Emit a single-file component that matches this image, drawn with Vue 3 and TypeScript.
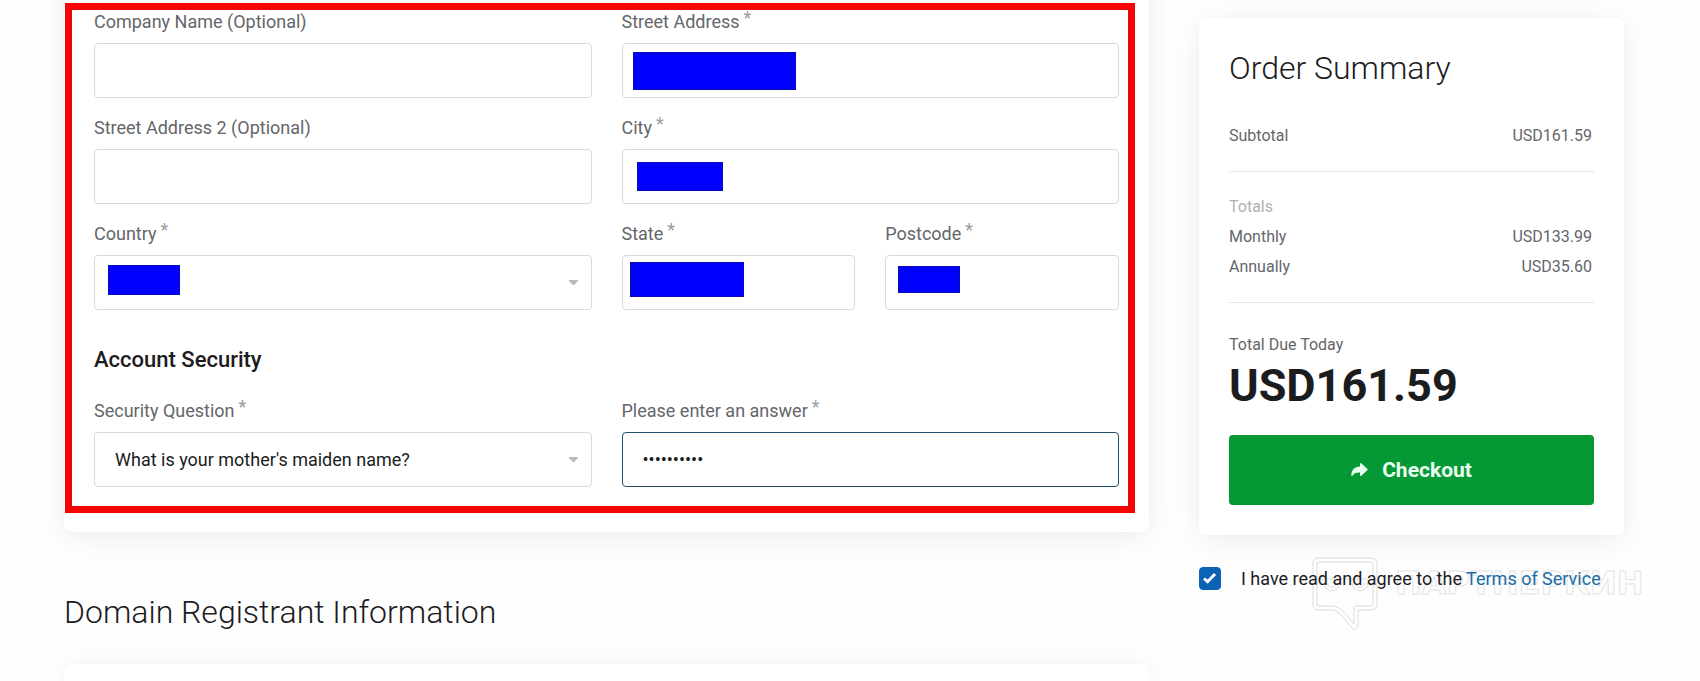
<script setup lang="ts">
import { ref } from 'vue'

interface Mask {
  left: number
  top: number
  width: number
  height: number
}

interface Field {
  id: string
  label: string
  kind: 'text' | 'password' | 'select'
  required?: boolean
  half?: boolean
  value?: string
  mask?: Mask
}

const addressFields: Field[] = [
  { id: 'company', label: 'Company Name (Optional)', kind: 'text' },
  { id: 'street', label: 'Street Address', kind: 'text', required: true, mask: { left: 11, top: 9, width: 163, height: 38 } },
  { id: 'street2', label: 'Street Address 2 (Optional)', kind: 'text' },
  { id: 'city', label: 'City', kind: 'text', required: true, mask: { left: 15, top: 13, width: 86, height: 29 } },
  { id: 'country', label: 'Country', kind: 'select', required: true, value: '', mask: { left: 14, top: 10, width: 72, height: 30 } },
  { id: 'state', label: 'State', kind: 'text', required: true, half: true, mask: { left: 8, top: 7, width: 114, height: 35 } },
  { id: 'postcode', label: 'Postcode', kind: 'text', required: true, half: true, mask: { left: 13, top: 11, width: 62, height: 27 } },
]

const securityFields: Field[] = [
  { id: 'question', label: 'Security Question', kind: 'select', required: true, value: "What is your mother's maiden name?" },
  { id: 'answer', label: 'Please enter an answer', kind: 'password', required: true, value: 'abcdefghij' },
]

const groups = [
  { title: '', fields: addressFields },
  { title: 'Account Security', fields: securityFields },
]

const totals = [
  { name: 'Monthly', amount: 'USD133.99' },
  { name: 'Annually', amount: 'USD35.60' },
]

const agreed = ref(true)

function maskStyle(m: Mask) {
  return { left: `${m.left}px`, top: `${m.top}px`, width: `${m.width}px`, height: `${m.height}px` }
}
</script>

<template>
  <div class="page">
    <main class="main">
      <section class="card billing">
        <template v-for="group in groups" :key="group.title">
          <h3 v-if="group.title" class="subtitle">{{ group.title }}</h3>
          <div class="fields">
            <div v-for="f in group.fields" :key="f.id" class="field" :class="{ half: f.half }">
              <label :for="f.id">{{ f.label }}<span v-if="f.required" class="star">*</span></label>
              <div class="control">
                <template v-if="f.kind === 'select'">
                  <select :id="f.id">
                    <option>{{ f.value }}</option>
                  </select>
                  <svg class="caret" viewBox="0 0 9 5" aria-hidden="true"><path d="M0 0h9v1L5.2 5H3.8L0 1z" /></svg>
                </template>
                <input v-else :id="f.id" :type="f.kind" :value="f.value" :class="{ active: f.kind === 'password' }" autocomplete="off" />
                <span v-if="f.mask" class="mask" :style="maskStyle(f.mask)"></span>
              </div>
            </div>
          </div>
        </template>
        <div class="frame"></div>
      </section>

      <h2 class="title domain">Domain Registrant Information</h2>
      <section class="card registrant"></section>
    </main>

    <aside class="side">
      <section class="card summary">
        <h2 class="title">Order Summary</h2>
        <dl class="rows">
          <div class="row"><dt>Subtotal</dt><dd>USD161.59</dd></div>
        </dl>
        <hr />
        <p class="muted">Totals</p>
        <dl class="rows">
          <div v-for="t in totals" :key="t.name" class="row"><dt>{{ t.name }}</dt><dd>{{ t.amount }}</dd></div>
        </dl>
        <hr />
        <p class="due">Total Due Today</p>
        <p class="amount">USD161.59</p>
        <button type="button" class="checkout">
          <svg class="arrow" viewBox="0 0 17 14" aria-hidden="true">
            <path d="M9 .7c0-.6.6-.9 1.1-.5l6.2 5.6c.5.4.5 1 0 1.4l-6.2 5.7c-.5.4-1.1.1-1.1-.5V9.500C5.400 9.300 3 10 1.600 12.600c-.5.8-1.300.6-1.300-.3C.4 7.300 3.400 3.800 9 3.600z" />
          </svg>
          <span>Checkout</span>
        </button>
      </section>

      <div class="terms">
        <span class="tick">
          <input id="agree" v-model="agreed" type="checkbox" />
          <svg v-if="agreed" viewBox="0 0 22 23" aria-hidden="true"><path d="M5 11.500l3.600 3.200L16 7" /></svg>
        </span>
        <label for="agree">I have read and agree to the <a href="#">Terms of Service</a></label>
        <div class="watermark">
          <svg viewBox="0 0 66 73" aria-hidden="true">
            <path d="M6 1h53q6 0 6 6v40q0 6-6 6H46v16q-2 5-6 2C34 65 28 53 20 53H6q-5 0-5-6V7q0-6 5-6z" />
            <path d="M8 5h51q2 0 2 2v40q0 2-2 2H43q-1 0-1 2v16C36 61 30 49 20 49H7q-2 0-2-2V7q0-2 3-2z" />
            <path d="M5 22h56M12 27c2 9 14 9 16 0h-5c-1 4-6 4-7 0zM40 27c2 9 14 9 16 0h-5c-1 4-6 4-7 0z" />
          </svg>
          <span>ПАРТНЕРКИН</span>
        </div>
      </div>
    </aside>
  </div>
</template>

<style>
body {
  margin: 0;
  background: #fefefe;
}
</style>

<style scoped>
.page {
  box-sizing: border-box;
  min-height: 100vh;
  padding: 0 76px 0 64px;
  display: grid;
  grid-template-columns: minmax(0, 1085fr) minmax(0, 425fr);
  column-gap: 50px;
  overflow: hidden;
  font-family: Roboto, 'Liberation Sans', sans-serif;
  font-size: 16px;
  color: #1b1c1e;
}
.page *,
.page *::before {
  box-sizing: border-box;
}
h2, h3, p, dl, dd {
  margin: 0;
}
.main {
  display: flex;
  flex-direction: column;
}
.card {
  background: #fff;
  border-radius: 6px;
  box-shadow: 0 5px 30px rgba(0, 0, 0, 0.07), 0 0 2px rgba(0, 0, 0, 0.05);
}
.billing {
  position: relative;
  margin-top: -40px;
  padding: 50px 30px 45px;
}
.frame {
  position: absolute;
  inset: 43px 14px 19px 1px;
  border: 7px solid #f50505;
  pointer-events: none;
}
.fields {
  display: grid;
  grid-template-columns: repeat(4, minmax(0, 1fr));
  gap: 18px 30px;
}
.field {
  grid-column: span 2;
}
.field.half {
  grid-column: span 1;
}
.field label {
  display: block;
  margin-bottom: 9px;
  font-size: 18px;
  line-height: 24px;
  color: #64666a;
}
.star {
  margin-left: 4px;
  line-height: 1px;
  vertical-align: 4px;
  color: #999b9f;
}
.control {
  position: relative;
}
input:not([type='checkbox']),
select {
  display: block;
  width: 100%;
  height: 55px;
  margin: 0;
  padding: 0 20px;
  border: 1px solid #d9dadb;
  border-radius: 4px;
  outline: none;
  background: #fff;
  appearance: none;
  font: 18px Roboto, 'Liberation Sans', sans-serif;
  color: #1b1c1e;
}
input.active:not([type='checkbox']) {
  border-color: #22506c;
}
.caret {
  position: absolute;
  right: 14px;
  top: 25px;
  width: 9px;
  height: 5px;
  fill: #b9babc;
  pointer-events: none;
}
.mask {
  position: absolute;
  background: #0000fe;
  border: 1px solid #0a0ab0;
}
.subtitle {
  margin: 37px 0 26px;
  font-size: 22px;
  line-height: 26px;
  font-weight: 500;
}
.title {
  font-size: 32px;
  line-height: 40px;
  font-weight: 300;
}
.domain {
  margin: 60px 0 32px;
}
.registrant {
  flex: 1;
  border-radius: 6px 6px 0 0;
}
.summary {
  margin-top: 18px;
  padding: 30px;
}
.rows,
.muted,
.due {
  line-height: 30px;
  color: #64666a;
}
.summary .title {
  margin-bottom: 33px;
}
.row {
  display: flex;
  justify-content: space-between;
  padding-right: 2px;
}
hr {
  height: 1px;
  margin: 20px 0;
  border: 0;
  background: #e4e5e6;
}
.muted {
  color: #afb1b4;
}
.due {
  margin-top: 27px;
}
.amount {
  font-size: 45px;
  line-height: 52px;
  font-weight: 700;
}
.checkout {
  display: flex;
  align-items: center;
  justify-content: center;
  gap: 14px;
  width: 100%;
  height: 70px;
  margin-top: 23px;
  padding: 0;
  border: 0;
  border-radius: 4px;
  background: #049934;
  color: #e9fff0;
  font: 700 21px Roboto, 'Liberation Sans', sans-serif;
}
.arrow {
  width: 17px;
  height: 14px;
  fill: currentColor;
}
.terms {
  position: relative;
  isolation: isolate;
  display: flex;
  align-items: center;
  gap: 20px;
  margin-top: 32px;
  font-size: 18px;
  line-height: 23px;
  white-space: nowrap;
}
.tick {
  position: relative;
  width: 22px;
  height: 23px;
}
.tick input {
  display: block;
  width: 22px;
  height: 23px;
  margin: 0;
  appearance: none;
  border: 1px solid #0c62b4;
  border-radius: 4px;
}
.tick input:checked {
  background: #0c62b4;
}
.tick svg {
  position: absolute;
  inset: 0;
  fill: none;
  stroke: #fff;
  stroke-width: 3;
  pointer-events: none;
}
.terms a {
  color: #1a6ca6;
  text-decoration: none;
}
.watermark {
  position: absolute;
  z-index: -1;
  left: 113px;
  top: -10px;
  display: flex;
  align-items: flex-start;
  gap: 17px;
  pointer-events: none;
}
.watermark svg {
  width: 66px;
  height: 73px;
  fill: none;
  stroke: #dcdcdd;
}
.watermark span {
  margin-top: 6px;
  font: 700 32px/40px 'DejaVu Sans', sans-serif;
  color: transparent;
  -webkit-text-stroke: 1px #e4e4e6;
}
</style>
